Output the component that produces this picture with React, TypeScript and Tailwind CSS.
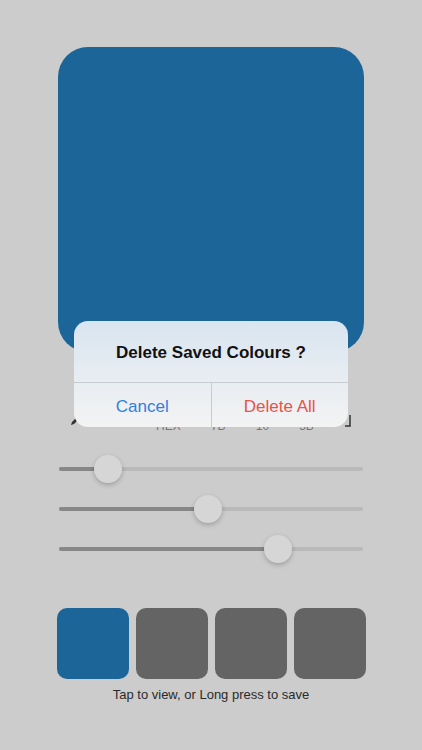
import React from 'react';

// slider values as fractions of the track
const sliders = [0.16, 0.49, 0.72];
const swatches = ['#1b6598', '#646464', '#646464', '#646464'];

function Slider({ value }: { value: number }) {
  return (
    <div className="relative h-[28px] w-[304px] flex items-center">
      <div className="h-[4px] w-full rounded-full bg-[#b9b9b9]" />
      <div
        className="absolute left-0 h-[4px] rounded-full bg-[#878787]"
        style={{ width: `${value * 100}%` }}
      />
      <div
        className="absolute h-[28px] w-[28px] -ml-[14px] rounded-full bg-[#d6d6d6] shadow-[0_2px_5px_rgba(0,0,0,0.22)]"
        style={{ left: `${value * 100}%` }}
      />
    </div>
  );
}

export default function App() {
  return (
    <div
      className="relative w-[422px] h-[750px] bg-[#cccccc] flex flex-col items-center overflow-hidden"
      style={{ fontFamily: '"Liberation Sans", Arial, sans-serif' }}
    >
      {/* current colour preview */}
      <div className="mt-[47px] w-[306px] h-[305px] rounded-[30px] bg-[#1b6598]" />

      {/* value row, mostly under the alert */}
      <div className="mt-[62px] w-[282px] h-[18px] flex items-end justify-between text-[12px] leading-[12px] text-[#777]">
        <svg width="10" height="10" viewBox="0 0 10 10" className="mb-[6px]">
          <path d="M1 9 L2 6 L7 1 L9 3 L4 8 Z" fill="#333" />
        </svg>
        <span className="ml-[46px]">HEX</span>
        <span>7B</span>
        <span>10</span>
        <span>5B</span>
        <svg width="8" height="14" viewBox="0 0 8 14" className="mb-[4px]">
          <path d="M6 1 V12 H1" stroke="#333" strokeWidth="1.5" fill="none" />
        </svg>
      </div>

      {/* RGB sliders */}
      <div className="mt-[23px] flex flex-col gap-[12px]">
        {sliders.map((v, i) => (
          <Slider key={i} value={v} />
        ))}
      </div>

      {/* saved colours */}
      <div className="mt-[45px] flex gap-[7px]">
        {swatches.map((c, i) => (
          <div key={i} className="w-[72px] h-[71px] rounded-[10px]" style={{ backgroundColor: c }} />
        ))}
      </div>
      <div className="mt-[6px] text-[13px] text-[#2a2a2a]">Tap to view, or Long press to save</div>

      {/* alert */}
      <div className="absolute left-[74px] top-[321px] w-[274px] h-[106px] rounded-[14px] overflow-hidden bg-gradient-to-b from-[#d9e5f0] to-[#f3f3f3] flex flex-col">
        <div className="h-[61px] pt-[2px] flex items-center justify-center text-[17px] font-bold text-[#111]">
          Delete Saved Colours ?
        </div>
        <div className="flex-1 pt-[3px] flex border-t border-[#c8ccd1]">
          <div className="flex-1 flex items-center justify-center text-[17px] text-[#2f7ee0]">Cancel</div>
          <div className="w-px -mt-[3px] bg-[#c8ccd1]" />
          <div className="flex-1 flex items-center justify-center text-[17px] text-[#e8524b]">Delete All</div>
        </div>
      </div>
    </div>
  );
}
